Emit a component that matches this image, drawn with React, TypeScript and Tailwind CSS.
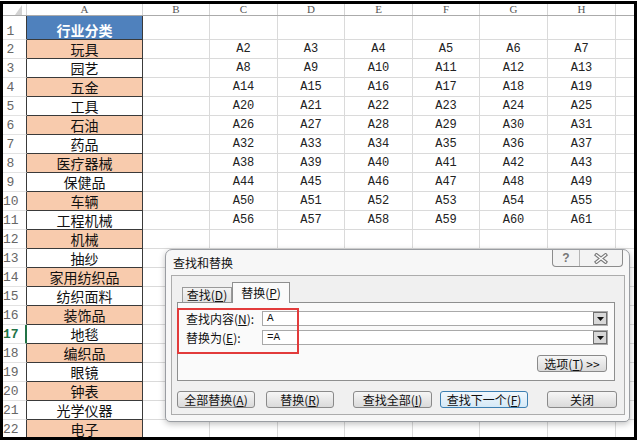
import React from "react";

const COLS = [
  "w-[24px]",
  "w-[116px]",
  "w-[67px]",
  "w-[68px]",
  "w-[67px]",
  "w-[68px]",
  "w-[67px]",
  "w-[68px]",
  "w-[68px]",
  "flex-1",
];
const LETTERS = ["A", "B", "C", "D", "E", "F", "G", "H", ""];
const ITEMS = [
  "玩具", "园艺", "五金", "工具", "石油", "药品", "医疗器械", "保健品", "车辆", "工程机械",
  "机械", "抽纱", "家用纺织品", "纺织面料", "装饰品", "地毯", "编织品", "眼镜", "钟表", "光学仪器", "电子",
];

const MONO = "font-['Liberation_Mono',monospace]";

function HeaderRow() {
  return (
    <div className="flex h-[12px] shrink-0 border-b border-[#ababab]">
      <div className={`${COLS[0]} shrink-0 relative border-r border-[#d4d4d4]`}>
        <svg className="absolute left-[12px] top-[1px]" width="8" height="10">
          <polygon points="7,0 7,10 0,10" fill="#d3d3d3" />
        </svg>
      </div>
      {LETTERS.map((l, i) => (
        <div
          key={i}
          className={`${COLS[i + 1]} ${i === 8 ? "" : "shrink-0 border-r border-[#d4d4d4]"} flex items-center justify-center text-[11px] leading-none text-[#555] font-['Liberation_Serif',serif]`}
        >
          {l}
        </div>
      ))}
    </div>
  );
}

function Row({ n }: { n: number }) {
  const first = n === 1;
  const active = n === 17;
  const label = first ? "行业分类" : ITEMS[n - 2];
  const peach = !first && n % 2 === 0;
  const data: string[] = [];
  if (n >= 2 && n <= 11) {
    for (let k = 0; k < 6; k++) data.push("A" + (6 * (n - 2) + 2 + k));
  }
  return (
    <div className={`flex shrink-0 ${first ? "h-[24px]" : "h-[19px]"}`}>
      <div
        className={`${COLS[0]} shrink-0 flex ${first ? "items-end pb-[1px]" : "items-center"} border-b border-[#e2e2e2] ${active ? "border-r-2 border-r-[#217346] text-[#217346] font-bold" : "border-r border-r-[#3a3a3a] text-[#666]"} ${MONO} text-[13px] leading-none`}
      >
        <span className="w-[15px] text-center">{n}</span>
      </div>
      <div
        className={`${COLS[1]} shrink-0 flex justify-center ${first ? "items-end pb-[1px] bg-[#4f81bd] text-white font-bold leading-[16px]" : peach ? "items-center bg-[#f8cbad] text-[#111] leading-[17px]" : "items-center bg-white text-[#111] leading-[17px]"} border-r border-b border-[#3a3a3a] text-[14px]`}
      >
        {label}
      </div>
      <div className={`${COLS[2]} shrink-0 border-r border-b border-[#dadada]`} />
      {[3, 4, 5, 6, 7, 8].map((c, k) => (
        <div
          key={c}
          className={`${COLS[c]} shrink-0 border-r border-b border-[#dadada] flex items-center justify-center ${MONO} text-[12px] leading-none text-[#222]`}
        >
          {data[k] ?? ""}
        </div>
      ))}
      <div className={`${COLS[9]} border-b border-[#dadada]`} />
    </div>
  );
}

function Btn({
  w,
  className = "",
  children,
  def = false,
}: {
  w: string;
  className?: string;
  children: React.ReactNode;
  def?: boolean;
}) {
  return (
    <div
      className={`${w} ${className} h-[17px] shrink-0 flex items-center justify-center rounded-[3px] border text-[12px] leading-none text-[#111] ${
        def
          ? "border-[#3c7fb1] bg-linear-to-b from-[#f1f8fd] to-[#d5e9f7]"
          : "border-[#8a8a8a] bg-linear-to-b from-[#f6f6f6] to-[#dadada]"
      }`}
    >
      {children}
    </div>
  );
}

function Combo({ value }: { value: string }) {
  return (
    <div className="w-[346px] h-[15px] shrink-0 flex items-center border border-[#a9a9a9] bg-white">
      <span className={`flex-1 pl-[4px] ${MONO} text-[11px] leading-none text-[#111]`}>{value}</span>
      <div className="w-[14px] h-[13px] flex items-center justify-center border border-[#6f6f6f] bg-[#d8d8d8]">
        <svg width="7" height="4">
          <polygon points="0,0 7,0 3.5,4" fill="#111" />
        </svg>
      </div>
    </div>
  );
}

function Dialog() {
  return (
    <div className="absolute left-[162px] top-[245px] w-[465px] h-[173px] rounded-t-[7px] rounded-b-[5px] border border-[#9a9da2] bg-[#f7f7f7] shadow-[0_2px_6px_rgba(0,0,0,0.25)] flex flex-col">
      <div className="relative h-[25px] shrink-0 flex items-center pl-[7px] text-[12px] leading-none text-[#111]">
        查找和替换
        <div className="absolute right-[6px] top-0 flex h-[17px] rounded-b-[4px] border border-t-0 border-[#8c8c8c] bg-[#f3f3f3] overflow-hidden">
          <div className="w-[27px] flex items-center justify-center border-r border-[#b5b5b5] text-[12px] font-bold leading-none text-[#777] font-['Liberation_Sans',sans-serif]">
            ?
          </div>
          <div className="w-[42px] flex items-center justify-center">
            <svg width="14" height="11">
              <path d="M2.5 2 L11.5 9 M11.5 2 L2.5 9" stroke="#7a7a7a" strokeWidth="3.6" strokeLinecap="square" />
              <path d="M2.5 2 L11.5 9 M11.5 2 L2.5 9" stroke="#ffffff" strokeWidth="1.4" strokeLinecap="square" />
            </svg>
          </div>
        </div>
      </div>
      <div className="ml-[5px] w-[454px] h-[140px] shrink-0 border border-[#acacac] bg-[#f0f0f0] flex flex-col pt-[6px]">
        <div className="h-[20px] flex items-end pl-[10px] shrink-0">
          <div className="w-[50px] h-[15px] flex items-center justify-center border border-b-0 border-[#9a9a9a] bg-linear-to-b from-[#f4f4f4] to-[#e2e2e2] text-[12px] leading-none text-[#111]">
            查找(<u>D</u>)
          </div>
          <div className="w-[58px] h-[21px] mb-[-1px] relative z-10 flex items-center justify-center border border-b-0 border-[#8e8f8f] bg-[#fafafa] text-[12px] leading-none text-[#111]">
            替换(<u>P</u>)
          </div>
        </div>
        <div className="ml-[5px] w-[438px] h-[79px] shrink-0 relative border border-[#8e8f8f] bg-[#fafafa] flex flex-col pt-[8px]">
          <div className="flex items-center h-[15px]">
            <div className="w-[84px] pl-[8px] text-[12px] leading-none text-[#111]">
              查找内容(<u>N</u>):
            </div>
            <Combo value="A" />
          </div>
          <div className="flex items-center h-[15px] mt-[4px]">
            <div className="w-[84px] pl-[8px] text-[12px] leading-none text-[#111]">
              替换为(<u>E</u>):
            </div>
            <Combo value="=A" />
          </div>
          <div className="flex justify-end pr-[7px] mt-[10px]">
            <Btn w="w-[70px]">
              选项(<u>T</u>)&nbsp;&gt;&gt;
            </Btn>
          </div>
          <div className="absolute left-[-1px] top-[5px] w-[122px] h-[46px] border-2 border-[#e23b3b]" />
        </div>
        <div className="flex pl-[5px] mt-[10px]">
          <Btn w="w-[78px]">全部替换(<u>A</u>)</Btn>
          <Btn w="w-[68px]" className="ml-[11px]">替换(<u>R</u>)</Btn>
          <Btn w="w-[79px]" className="ml-[19px]">查找全部(<u>I</u>)</Btn>
          <Btn w="w-[88px]" className="ml-[8px]" def>
            查找下一个(<u>F</u>)
          </Btn>
          <Btn w="w-[70px]" className="ml-[19px]">关闭</Btn>
        </div>
      </div>
    </div>
  );
}

export default function App() {
  const rows = Array.from({ length: 22 }, (_, i) => i + 1);
  return (
    <div className="w-[640px] h-[444px] bg-white pt-[1px] font-['Noto_Sans_CJK_SC',sans-serif] overflow-hidden">
      <div className="relative w-[637px] h-[439px] border-[3px] border-black overflow-hidden bg-white flex flex-col">
        <HeaderRow />
        {rows.map((n) => (
          <Row key={n} n={n} />
        ))}
        <Dialog />
      </div>
    </div>
  );
}
